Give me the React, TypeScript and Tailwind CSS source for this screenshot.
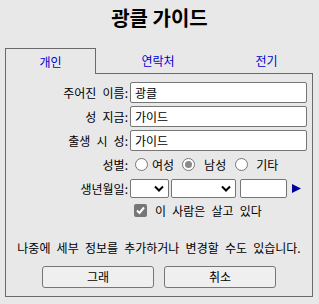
import React from "react";

const font = { fontFamily: '"Noto Sans CJK KR", "Noto Sans", sans-serif' };

function Chevron() {
  return (
    <svg width="10" height="7" viewBox="0 0 10 7" className="shrink-0">
      <path d="M1 1.5 L5 5.5 L9 1.5" fill="none" stroke="#000" strokeWidth="2" />
    </svg>
  );
}

function Radio({ checked }: { checked?: boolean }) {
  return (
    <span className="w-[13px] h-[13px] rounded-full border border-[#767676] bg-white flex items-center justify-center shrink-0">
      {checked && <span className="w-[7px] h-[7px] rounded-full bg-[#8a8a8a]" />}
    </span>
  );
}

function TextInput({ value }: { value: string }) {
  return (
    <div className="h-[21px] w-[177px] border border-[#767676] rounded-[2px] bg-white flex items-center pl-[4px] text-[12px] text-black">
      {value}
    </div>
  );
}

export default function App() {
  return (
    <div className="w-[319px] h-[304px] bg-[#e8e8e8] text-black overflow-hidden [word-spacing:3.5px]" style={font}>
      <div className="h-[34px] flex items-center justify-center text-[20px] font-bold leading-none pt-[2px] [word-spacing:0px]">
        광클 가이드
      </div>
      <div className="h-[14px]" />
      <div className="ml-[5px] w-[308px]">
        <div className="flex h-[26px] text-[12px] text-[#0000d0]">
          <div className="w-[91px] border-l border-t border-r border-[#6a6a6a] flex items-center justify-center">
            개인
          </div>
          <div className="flex-1 flex border-b border-[#6a6a6a]">
            <div className="w-[124px] flex items-center justify-center">연락처</div>
            <div className="flex-1 flex items-center justify-center">전기</div>
          </div>
        </div>
        <div className="h-[223px] border-l border-r border-b border-[#6a6a6a] pt-[8px] text-[12px]">
          <div className="flex flex-col gap-[3px]">
            <div className="flex items-center h-[21px]">
              <div className="w-[123px] text-right pr-[1px]">주어진 이름:</div>
              <div className="ml-[1px]"><TextInput value="광클" /></div>
            </div>
            <div className="flex items-center h-[21px]">
              <div className="w-[123px] text-right pr-[1px]">성 지금:</div>
              <div className="ml-[1px]"><TextInput value="가이드" /></div>
            </div>
            <div className="flex items-center h-[21px]">
              <div className="w-[123px] text-right pr-[1px]">출생 시 성:</div>
              <div className="ml-[1px]"><TextInput value="가이드" /></div>
            </div>
            <div className="flex items-center h-[21px]">
              <div className="w-[123px] text-right pr-[1px]">성별:</div>
              <div className="ml-[6px] flex items-center">
                <Radio />
                <span className="ml-[4px]">여성</span>
                <span className="ml-[8px]"><Radio checked /></span>
                <span className="ml-[9px]">남성</span>
                <span className="ml-[9px]"><Radio /></span>
                <span className="ml-[8px]">기타</span>
              </div>
            </div>
            <div className="flex items-center h-[21px]">
              <div className="w-[123px] text-right pr-[1px]">생년월일:</div>
              <div className="ml-[1px] flex items-center">
                <div className="w-[39px] h-[19px] border border-[#767676] rounded-[2px] bg-white flex items-center justify-end pr-[4px]">
                  <Chevron />
                </div>
                <div className="ml-[2px] w-[65px] h-[19px] border border-[#767676] rounded-[2px] bg-white flex items-center justify-end pr-[4px]">
                  <Chevron />
                </div>
                <div className="ml-[4px] w-[47px] h-[19px] border border-[#767676] rounded-[2px] bg-white" />
                <svg width="9" height="9" viewBox="0 0 9 9" className="ml-[5px]">
                  <path d="M0 0 L9 4.5 L0 9 Z" fill="#0000a0" />
                </svg>
              </div>
            </div>
          </div>
          <div className="flex items-center h-[13px] mt-[5px] ml-[128px]">
            <span className="w-[13px] h-[13px] rounded-[2px] bg-[#767676] flex items-center justify-center">
              <svg width="11" height="11" viewBox="0 0 11 11">
                <path d="M2 5.5 L4.5 8 L9 2.5" fill="none" stroke="#fff" strokeWidth="2" />
              </svg>
            </span>
            <span className="ml-[8px]">이 사람은 살고 있다</span>
          </div>
          <div className="mt-[22px] h-[17px] leading-[17px] text-center">나중에 세부 정보를 추가하거나 변경할 수도 있습니다.</div>
          <div className="mt-[10px] flex">
            <div className="ml-[36px] w-[112px] h-[22px] border border-[#767676] rounded-[3px] bg-[#efefef] flex items-center justify-center">그래</div>
            <div className="ml-[10px] w-[112px] h-[22px] border border-[#767676] rounded-[3px] bg-[#efefef] flex items-center justify-center">취소</div>
          </div>
        </div>
      </div>
    </div>
  );
}
